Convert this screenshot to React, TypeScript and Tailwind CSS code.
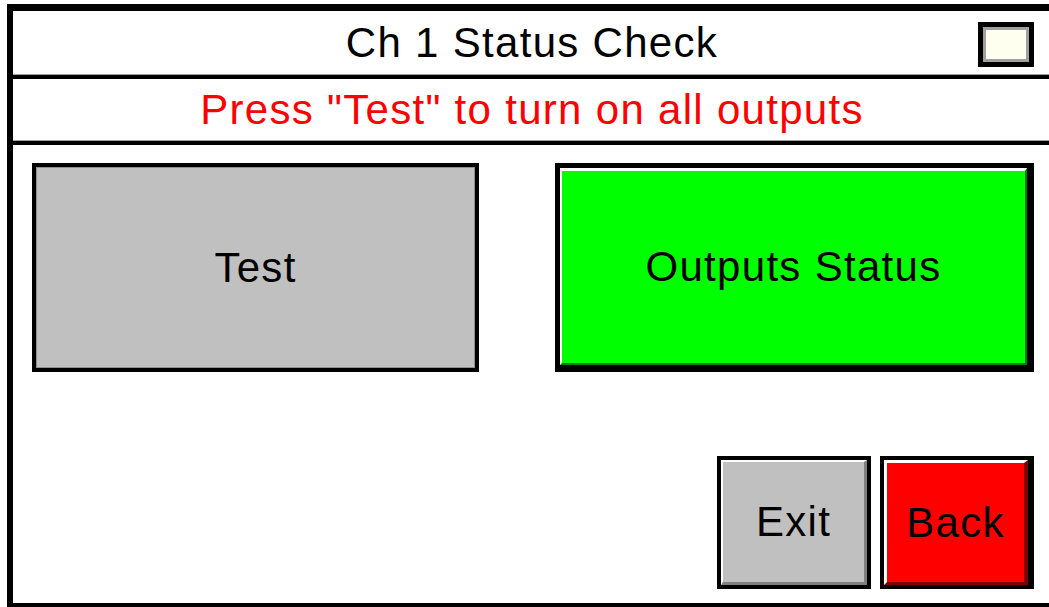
import React from "react";

const font = { fontFamily: '"Liberation Sans", Arial, sans-serif' };

function Separator() {
  return (
    <div className="flex flex-col shrink-0">
      <div className="h-[1px] bg-[#a0a0a0]" />
      <div className="h-[4px] bg-black" />
    </div>
  );
}

export default function App() {
  return (
    <div
      className="relative w-[1049px] h-[607px] overflow-hidden bg-white"
      style={font}
    >
      <div className="ml-[7px] mt-[4px] w-[1060px] h-[605px] border-t-[7px] border-l-[6px] border-r-[6px] border-b-[6px] border-black flex flex-col text-[42px] tracking-[1.3px] leading-none">
        {/* Title row */}
        <div className="relative h-[63px] shrink-0 flex items-center justify-center pr-[10px] text-black">
          <span>Ch 1 Status Check</span>
          <div className="absolute right-[27px] top-[11px] w-[56px] h-[45px] border-[5px] border-black">
            <div className="w-full h-full border-[3px] border-[#a0a0a0] bg-[#fffff0]" />
          </div>
        </div>
        <Separator />
        {/* Instruction row */}
        <div className="h-[61px] shrink-0 flex items-center justify-center pr-[10px] text-[#ff0000]">
          <span>Press "Test" to turn on all outputs</span>
        </div>
        <Separator />
        {/* Body */}
        <div className="flex-1 flex flex-col justify-between pt-[18px] pl-[19px] pr-[27px] pb-[14px]">
          <div className="flex gap-[76px]">
            <div className="w-[447px] h-[209px] border-4 border-black">
              <div className="w-full h-full border border-[#909090] bg-[#c0c0c0] flex items-center justify-center text-black">
                Test
              </div>
            </div>
            <div className="w-[479px] h-[209px] border-t-[5px] border-l-[5px] border-r-[7px] border-b-[7px] border-black">
              <div className="w-full h-full border-t-[3px] border-l-[2px] border-t-white border-l-white border-b-[2px] border-r-[2px] border-b-[#008000] border-r-[#008000] bg-[#00ff00] flex items-center justify-center text-black">
                Outputs Status
              </div>
            </div>
          </div>
          <div className="flex justify-end gap-[9px]">
            <div className="w-[154px] h-[133px] border-[4px] border-black">
              <div className="w-full h-full border-t-[2px] border-l-[2px] border-t-white border-l-white border-b-[3px] border-r-[3px] border-b-[#808080] border-r-[#808080] bg-[#c0c0c0] flex items-center justify-center text-black">
                Exit
              </div>
            </div>
            <div className="w-[154px] h-[133px] border-t-[4px] border-l-[4px] border-r-[6px] border-b-[4px] border-black">
              <div className="w-full h-full border-t-[3px] border-l-[3px] border-t-white border-l-white border-b-[3px] border-r-[4px] border-b-[#800000] border-r-[#800000] bg-[#ff0000] flex items-center justify-center text-black">
                Back
              </div>
            </div>
          </div>
        </div>
      </div>
    </div>
  );
}
